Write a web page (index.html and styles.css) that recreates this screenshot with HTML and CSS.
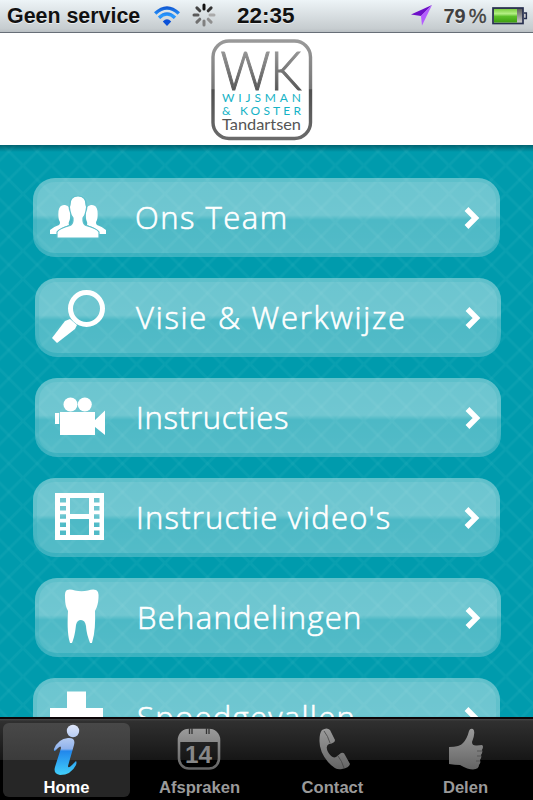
FILE: index.html
```html
<!DOCTYPE html>
<html lang="nl">
<head>
    <meta charset="UTF-8">
    <meta name="viewport" content="width=device-width, initial-scale=1.0">
    <title>Wijsman &amp; Koster Tandartsen</title>
    <link rel="stylesheet" href="styles.css">
</head>
<body>
    <div class="status-bar">
        <span class="carrier">Geen service</span>
        <svg class="wifi" width="28" height="22" viewBox="0 0 28 22">
            <defs>
                <linearGradient id="wifi-blue" x1="0" y1="0" x2="0" y2="22" gradientUnits="userSpaceOnUse">
                    <stop offset="0" stop-color="#0a49c9"/>
                    <stop offset=".5" stop-color="#2a9bff"/>
                    <stop offset="1" stop-color="#0a50d8"/>
                </linearGradient>
            </defs>
            <g fill="none" stroke="url(#wifi-blue)" stroke-width="3.4">
                <path d="M2.200 8.600Q14-2.600 25.800 8.600"/>
                <path d="M6 12.800Q14 5.200 22 12.800"/>
            </g>
            <path d="M9.800 16.500Q14 12 18.200 16.500L14 21Z" fill="#0a50d8"/>
        </svg>
        <svg class="spinner" width="24" height="24" viewBox="-12 -12 24 24">
            <g stroke-width="3" stroke-linecap="round">
                <path d="M0-6V-10" stroke="#111"/>
                <path d="M4.2-4.2L7.1-7.1" stroke="#333"/>
                <path d="M6 0H10" stroke="#aaa"/>
                <path d="M4.2 4.2L7.1 7.1" stroke="#8f8f8f"/>
                <path d="M0 6V10" stroke="#808080"/>
                <path d="M-4.2 4.2L-7.1 7.1" stroke="#707070"/>
                <path d="M-6 0H-10" stroke="#5a5a5a"/>
                <path d="M-4.2-4.2L-7.1-7.1" stroke="#444"/>
            </g>
        </svg>
        <span class="clock">22:35</span>
        <svg class="location" width="22" height="22" viewBox="0 0 22 22">
            <path d="M21 0L0 9.5L10 11Z" fill="#6d10c8"/>
            <path d="M21 0L10 11L11 20.5Z" fill="#b45cff"/>
        </svg>
        <span class="percent">79<span class="sign">%</span></span>
        <svg class="battery" width="36" height="18" viewBox="0 0 36 18">
            <defs>
                <linearGradient id="battery-green" x1="0" y1="0" x2="0" y2="1">
                    <stop offset="0" stop-color="#7ccf40"/>
                    <stop offset=".35" stop-color="#b4ef85"/>
                    <stop offset=".55" stop-color="#5cc02a"/>
                    <stop offset="1" stop-color="#3d9e10"/>
                </linearGradient>
                <linearGradient id="battery-grey" x1="0" y1="0" x2="0" y2="1">
                    <stop offset="0" stop-color="#555"/>
                    <stop offset="1" stop-color="#d5d5d5"/>
                </linearGradient>
            </defs>
            <rect x="1" y="1" width="30" height="15.5" fill="url(#battery-grey)" stroke="#27304f" stroke-width="1.7"/>
            <rect x="2" y="2" width="23" height="13.5" fill="url(#battery-green)"/>
            <path d="M32 6H34.4V11.5H32" fill="#ccc" stroke="#27304f" stroke-width="1.4"/>
        </svg>
    </div>

    <header class="header">
        <svg class="logo" width="102" height="102" viewBox="0 0 102 102">
            <defs>
                <linearGradient id="frame" x1="0" y1="0" x2="0" y2="1">
                    <stop offset="0" stop-color="#999"/>
                    <stop offset=".49" stop-color="#777"/>
                    <stop offset=".5" stop-color="#505050"/>
                    <stop offset="1" stop-color="#6a6a6a"/>
                </linearGradient>
                <linearGradient id="initials" x1="0" y1="10" x2="0" y2="52" gradientUnits="userSpaceOnUse">
                    <stop offset="0" stop-color="#999"/>
                    <stop offset="1" stop-color="#555"/>
                </linearGradient>
            </defs>
            <rect x="2" y="2" width="97.5" height="97.5" rx="16" fill="#fff" stroke="url(#frame)" stroke-width="3.4"/>
            <text class="logo-initials" x="9.500" y="50.500" textLength="81" lengthAdjust="spacingAndGlyphs" fill="url(#initials)" stroke="url(#initials)">WK</text>
            <text class="logo-name" x="11" y="63" textLength="79">WIJSMAN</text>
            <text class="logo-name" x="11" y="75.500" textLength="79">&amp; KOSTER</text>
            <text class="logo-sub" x="11" y="90.500" textLength="79" lengthAdjust="spacingAndGlyphs">Tandartsen</text>
        </svg>
    </header>

    <main class="content">
        <a class="item" href="#">
            <svg class="icon" width="76" height="79" viewBox="0 0 76 79">
                <g fill="#fff">
                    <path d="M31 27C34 27 37 29 37 33V40C37 43 35 44 36 47L29 50Q26 52 25 56H17V52Q20 49 26 47Q28 45 26 42Q25 39 25.500 33C26 29 28 27 31 27Z"/>
                    <path d="M59 27C56 27 53 29 53 33V40C53 43 55 44 54 47L61 50Q64 52 65 56H73V52Q70 49 64 47Q62 45 64 42Q65 39 64.500 33C64 29 62 27 59 27Z"/>
                    <path class="bust" d="M45 18C50 18 53.500 21 53 27Q54.500 29 53 33Q52 38 50 40Q49.500 46 53 47.500Q64 50.500 66 54V60H24V54Q26 50.500 37 47.500Q40.500 46 40 40Q38 38 37 33Q35.500 29 37 27C36.500 21 40 18 45 18Z"/>
                </g>
            </svg>
            <span class="label team">Ons Team</span>
            <svg class="arrow" width="16" height="24" viewBox="0 0 16 24"><path d="M2.500 3L11.500 12L2.500 21"/></svg>
        </a>
        <a class="item shifted" href="#">
            <svg class="icon" width="76" height="79" viewBox="0 0 76 79">
                <circle cx="51.500" cy="30.500" r="16" fill="none" stroke="#fff" stroke-width="5"/>
                <path d="M35 41L42 47L40 51L22 65L17 60L30 43Z" fill="#fff"/>
            </svg>
            <span class="label vision">Visie &amp; Werkwijze</span>
            <svg class="arrow" width="16" height="24" viewBox="0 0 16 24"><path d="M2.500 3L11.500 12L2.500 21"/></svg>
        </a>
        <a class="item shifted" href="#">
            <svg class="icon" width="76" height="79" viewBox="0 0 76 79">
                <g fill="#fff">
                    <circle cx="35.500" cy="26.500" r="7"/>
                    <circle cx="49.800" cy="26.500" r="7"/>
                    <path d="M25 34H60V42L70 32.500V57L60 49V57H25Z"/>
                    <rect x="20" y="35" width="4.200" height="11"/>
                </g>
            </svg>
            <span class="label instructions">Instructies</span>
            <svg class="arrow" width="16" height="24" viewBox="0 0 16 24"><path d="M2.500 3L11.500 12L2.500 21"/></svg>
        </a>
        <a class="item" href="#">
            <svg class="icon" width="76" height="79" viewBox="0 0 76 79">
                <path fill="#fff" fill-rule="evenodd" d="M22 15H71V62H22ZM37 20V36H56V20ZM37 41V57H56V41ZM27 20V24.500H33V20ZM27 28V32.500H33V28ZM27 36.300V40.800H33V36.300ZM27 44.500V49H33V44.500ZM27 52.500V57H33V52.500ZM61 20V24.500H66.500V20ZM61 28V32.500H66.500V28ZM61 36.300V40.800H66.500V36.300ZM61 44.500V49H66.500V44.500ZM61 52.500V57H66.500V52.500Z"/>
            </svg>
            <span class="label videos">Instructie video's</span>
            <svg class="arrow" width="16" height="24" viewBox="0 0 16 24"><path d="M2.500 3L11.500 12L2.500 21"/></svg>
        </a>
        <a class="item shifted" href="#">
            <svg class="icon" width="76" height="79" viewBox="0 0 76 79">
                <path fill="#fff" d="M32 12Q35 11 40 12.500Q46.500 14 53 12.500Q58 11 61 12Q64 13 63.500 20Q63 28 60 33C60.500 44 60 55 57 65H55C53 59 51.500 55 51 48Q50 42 46 42Q42 42 41 47C40 56 39 60 37 65H35C32 55 32.500 43 33 33Q30 28 30 20Q29.500 13 32 12Z"/>
            </svg>
            <span class="label treatments">Behandelingen</span>
            <svg class="arrow" width="16" height="24" viewBox="0 0 16 24"><path d="M2.500 3L11.500 12L2.500 21"/></svg>
        </a>
        <a class="item" href="#">
            <svg class="icon" width="76" height="79" viewBox="0 0 76 79">
                <path fill="#fff" d="M34 13.500H53V30H70V47H53V64H34V47H17V30H34Z"/>
            </svg>
            <span class="label emergency">Spoedgevallen</span>
            <svg class="arrow" width="16" height="24" viewBox="0 0 16 24"><path d="M2.500 3L11.500 12L2.500 21"/></svg>
        </a>
    </main>

    <nav class="tab-bar">
        <a class="tab active" href="#">
            <svg width="50" height="54" viewBox="0 -1 50 54">
                <defs>
                    <linearGradient id="info-blue" x1="0" y1="0" x2="0" y2="52" gradientUnits="userSpaceOnUse">
                        <stop offset="0" stop-color="#e3e9fa"/>
                        <stop offset=".48" stop-color="#8fb2ec"/>
                        <stop offset=".52" stop-color="#2187ec"/>
                        <stop offset="1" stop-color="#43d2fb"/>
                    </linearGradient>
                </defs>
                <g fill="url(#info-blue)">
                    <circle cx="32" cy="7" r="6.200"/>
                    <path d="M13 25Q17 15 27 14Q35 13.500 33 21L27 42Q27 45 31 41L35 37Q36 38 35 41Q30 51 19 51Q12 50 14 43L20 24Q20 21 17 24L14 27Q12.500 27.500 13 25Z"/>
                </g>
            </svg>
            <span class="tab-label">Home</span>
        </a>
        <a class="tab" href="#">
            <svg width="50" height="54" viewBox="0 -1 50 54">
                <defs>
                    <linearGradient id="tab-grey" x1="0" y1="4" x2="0" y2="46" gradientUnits="userSpaceOnUse">
                        <stop offset="0" stop-color="#9c9c9c"/>
                        <stop offset="1" stop-color="#636363"/>
                    </linearGradient>
                </defs>
                <rect x="5" y="6" width="40" height="38.500" rx="10" fill="none" stroke="url(#tab-grey)" stroke-width="2.600"/>
                <path d="M5 18V14Q6 6 14 5H36Q44 6 45 14V18Z" fill="url(#tab-grey)"/>
                <path d="M15.500 4V10M18 4V10M32.500 4V10M35 4V10" stroke="#333" stroke-width="1.300"/>
                <text class="calendar-day" x="11" y="39" textLength="27" lengthAdjust="spacingAndGlyphs">14</text>
            </svg>
            <span class="tab-label">Afspraken</span>
        </a>
        <a class="tab" href="#">
            <svg width="50" height="54" viewBox="0 -1 50 54">
                <path fill="url(#tab-grey)" d="M15 6Q20 3 23 6L28 16Q28 19 22 20Q18 22 21 28Q25 35 29 33L34 29Q37 28 38 31L43 40Q42 44 35 45Q29 47 21 38Q12 27 12.500 16Q12.500 9 15 6Z"/>
                <path d="M17 7Q21 12 23 19M31 32Q35 37 37 44" fill="none" stroke="#444" stroke-width=".8"/>
            </svg>
            <span class="tab-label">Contact</span>
        </a>
        <a class="tab" href="#">
            <svg width="50" height="54" viewBox="0 -1 50 54">
                <path fill="url(#tab-grey)" d="M9 23Q20 23 23 19Q27 15 29 7Q30 4 33 5Q36 8 32 18Q32 22 37 21.500L42 21Q44 22 42 26Q43 28 41 31Q42 33 40 36Q41 39 39 41Q39 45 33 45.500Q28 45.500 20 41Q15 41 9 40Z"/>
                <path d="M37 27H42M37 32H41M36 37H40" stroke="#555" stroke-width="1"/>
            </svg>
            <span class="tab-label">Delen</span>
        </a>
    </nav>
</body>
</html>
```
FILE: styles.css
```css
* { box-sizing: border-box; }
body { font-family: "Liberation Sans", Arial, Helvetica, sans-serif; margin: 0; height: 800px; display: flex; flex-direction: column; overflow: hidden; background-color: #000; }
a { text-decoration: none; color: inherit; }
svg { display: block; flex: none; }

.status-bar { flex: none; height: 33px; display: flex; align-items: center; padding: 0 5px 0 7px; background: linear-gradient(#edf4f7, #c6cccf 90%, #b9bfc3); border-bottom: 1px solid #676e77; color: #111; font-size: 21.4px; font-weight: bold; text-shadow: 0 1px 0 rgba(255,255,255,0.6); white-space: nowrap; }
.carrier { width: 133px; }
.wifi { margin-left: 13px; }
.spinner { margin-left: 11px; margin-top: -3px; }
.clock { margin-left: 21px; width: 59px; font-size: 22.5px; }
.location { margin-left: 116px; margin-right: 10px; }
.percent { width: 45px; color: #404040; font-size: 20px; }
.sign { margin-left: 3px; font-weight: normal; -webkit-text-stroke: 0.4px #404040; }
.battery { margin-left: 4px; }

.header { flex: none; height: 112px; display: flex; justify-content: center; padding: 6px 10px 0 0; background-color: #fff; }
.logo-initials { font-family: Lato, sans-serif; font-size: 54px; font-weight: 300; stroke-width: 1; }
.logo-name { font-family: Lato, sans-serif; font-size: 12px; fill: #16b3c6; }
.logo-sub { font-family: Lato, sans-serif; font-size: 15px; fill: #555; }

.content { flex: none; height: 572px; overflow: hidden; padding: 33px 0 0 33px; display: flex; flex-direction: column; gap: 21px; background-color: #009bad;
    background-image: linear-gradient(rgba(0,50,60,0.55), transparent), linear-gradient(45deg, transparent 45%, rgba(60,185,195,0.16) 48%, rgba(60,185,195,0.16) 52%, transparent 55%), linear-gradient(-45deg, transparent 45%, rgba(60,185,195,0.16) 48%, rgba(60,185,195,0.16) 52%, transparent 55%);
    background-size: 100% 7px, 28.4px 28.4px, 28.4px 28.4px;
    background-position: 0 0, 23px 20.5px, 23px 20.5px;
    background-repeat: no-repeat, repeat, repeat; }
.item { flex: none; width: 467px; height: 79px; display: flex; align-items: center; border-radius: 22px; background: linear-gradient(rgba(255,255,255,0.42), rgba(255,255,255,0.44) 47%, rgba(255,255,255,0.3) 53%, rgba(255,255,255,0.33)); box-shadow: inset 0 0 0 4px rgba(0,155,173,0.12), inset 0 -4px 0 rgba(0,155,173,0.2); color: #fff; }
.item.shifted { width: 466px; margin-left: 2px; }
.label { flex: 1; margin: -2px 0 0 26px; font-family: "Open Sans", "Noto Sans", sans-serif; font-size: 31px; font-weight: 300; line-height: 40px; letter-spacing: 1.5px; white-space: nowrap; -webkit-text-stroke: 0.6px #fff; }
.vision { margin-left: 25px; letter-spacing: 1.75px; }
.instructions { margin-left: 25px; letter-spacing: 0.75px; }
.videos { margin-left: 27px; letter-spacing: 1.2px; }
.treatments { margin-left: 26px; letter-spacing: 1.3px; }
.emergency { margin-left: 28px; letter-spacing: 1.3px; }
.arrow { margin-right: 20px; fill: none; stroke: #fff; stroke-width: 5.4; }
.bust { stroke: #5fbfcb; stroke-width: 1.2; }

.tab-bar { flex: none; height: 83px; display: flex; align-items: center; border-top: 2px solid #0c0507; background: linear-gradient(#4a4a4a, #303030 2px, #161616 41px, #000 41px); }
.tab { width: 133px; height: 74px; display: flex; flex-direction: column; align-items: center; color: #9a9a9a; font-size: 16.6px; font-weight: bold; }
.tab svg { margin-left: -1px; }
.tab.active { width: 127px; margin: 0 3px; border-radius: 6px; background: linear-gradient(#484848, #3b3b3b 37px, #262626 37px); color: #fff; }
.tab-label { line-height: 21px; }
.calendar-day { font-size: 24px; font-weight: bold; fill: #888; }
```
